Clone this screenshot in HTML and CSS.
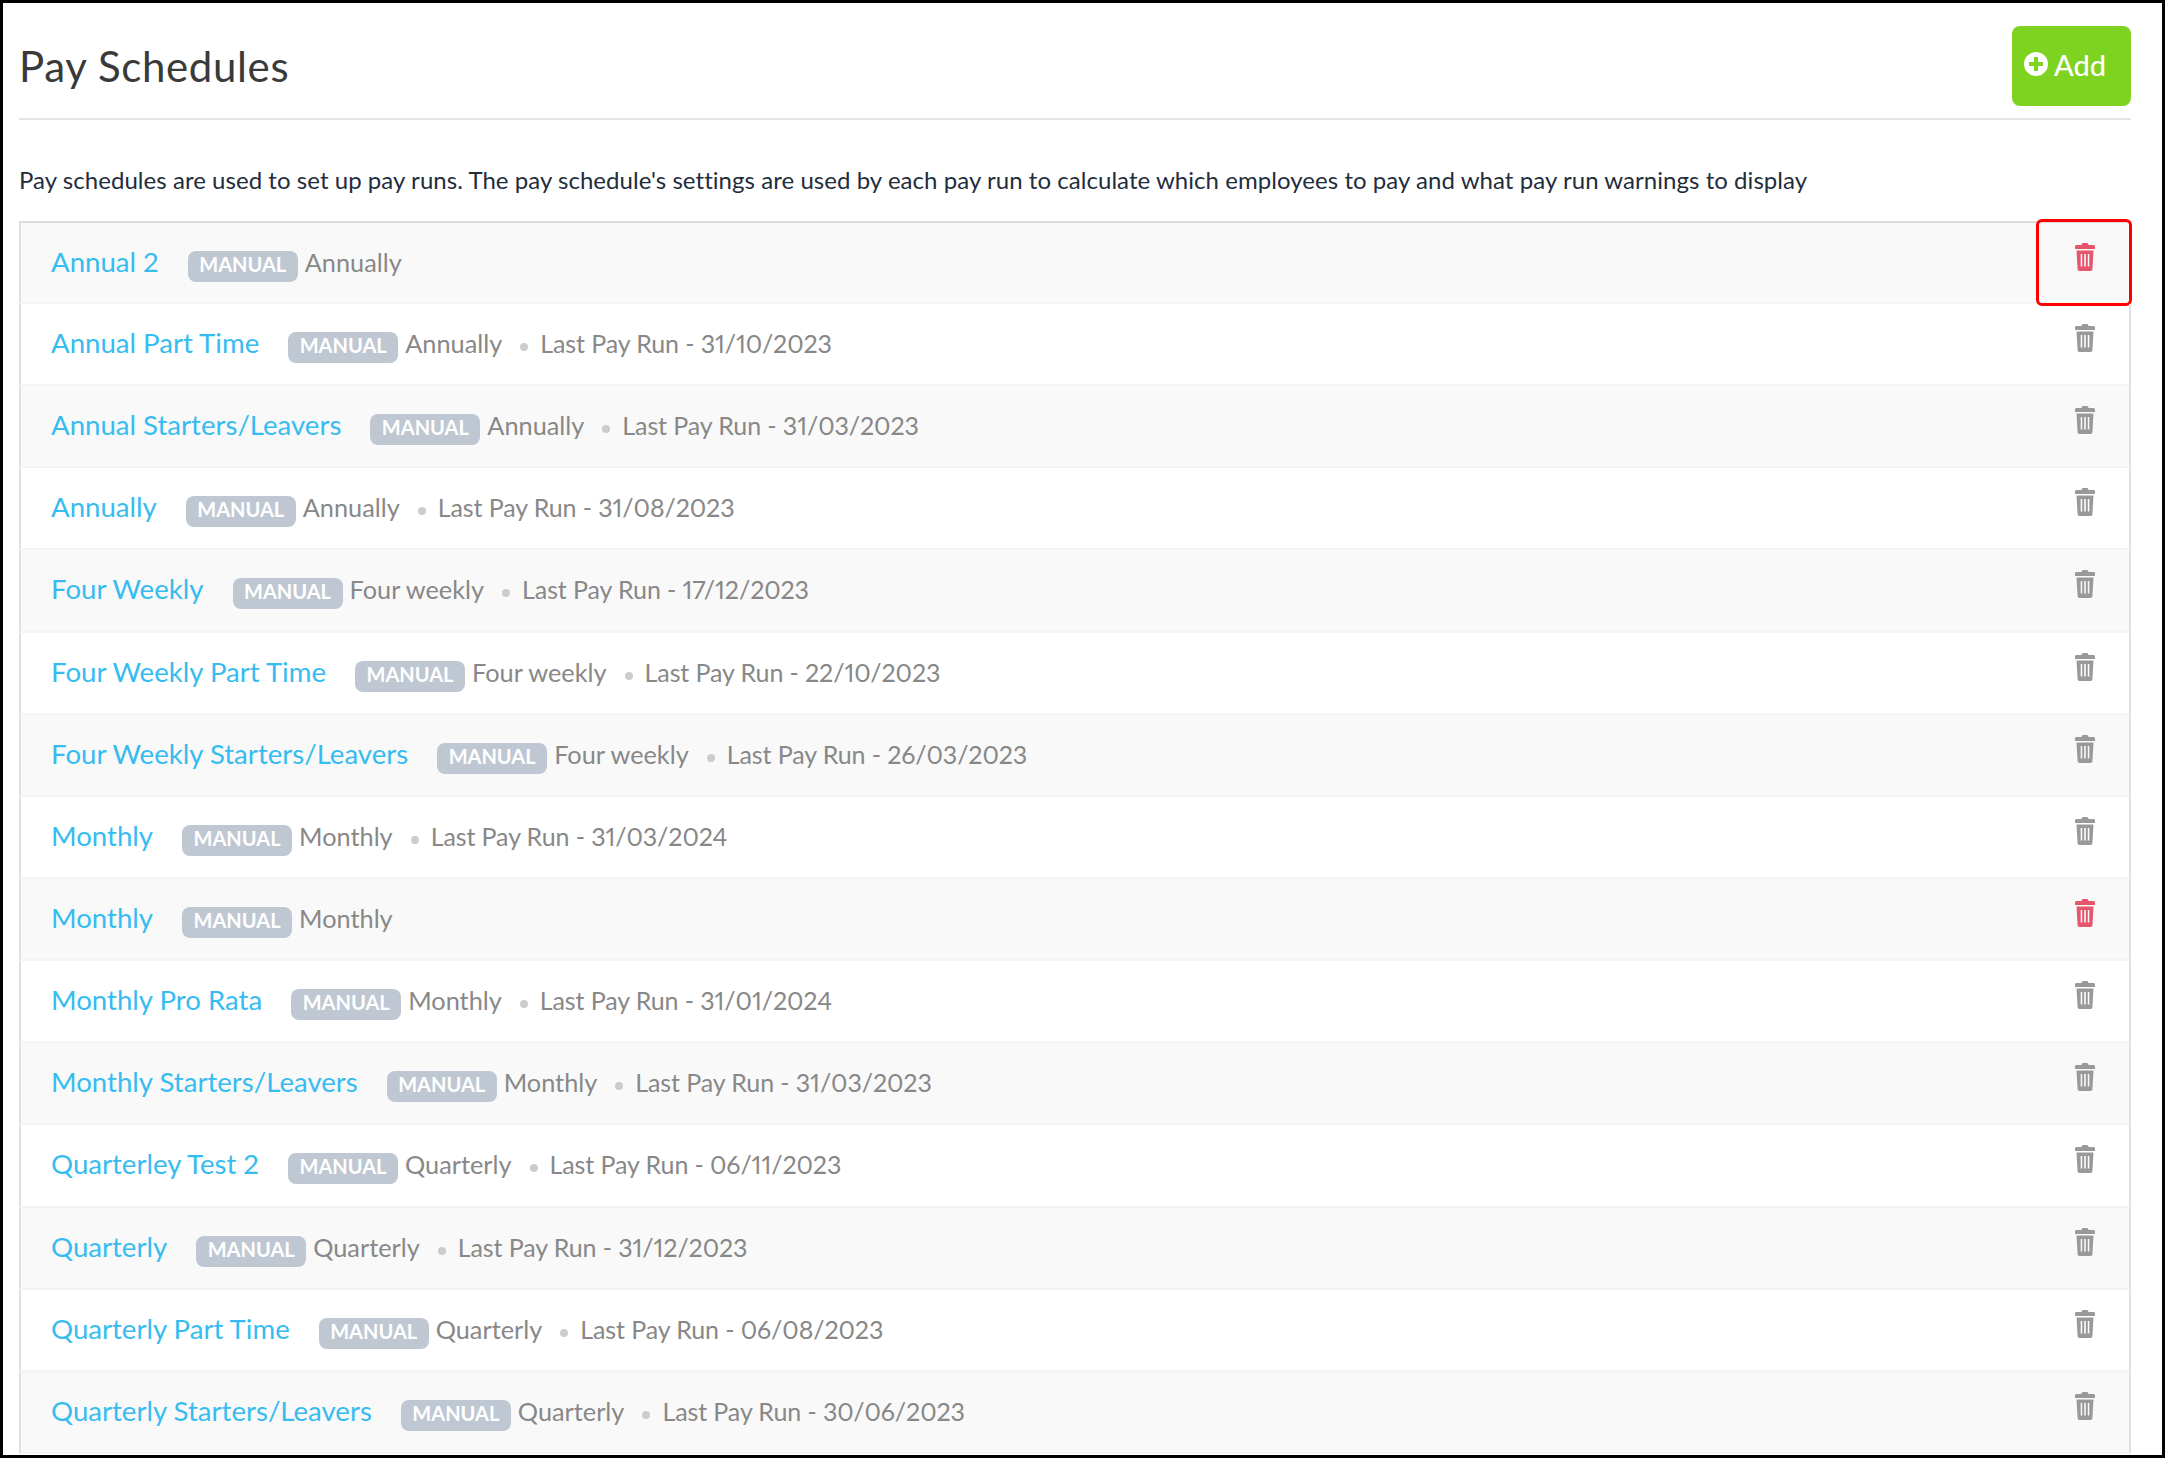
FILE: index.html
```html
<!DOCTYPE html>
<html lang="en">
<head>
<meta charset="utf-8">
<title>Pay Schedules</title>
<link rel="stylesheet" href="styles.css">
</head>
<body>
<svg class="defs" width="0" height="0" aria-hidden="true">
  <symbol id="trash" viewBox="0 0 20 28">
    <path fill-rule="evenodd" d="M7 .6C7.2.2 7.6 0 8 0h4c.4 0 .8.2 1 .6l.5 1.4h5c.8 0 1.5.6 1.5 1.4V6H0V3.400C0 2.600.7 2 1.500 2h5zM1.500 7.500h17l-1.100 18.800c-.1 1-.9 1.700-1.900 1.700H4.500c-1 0-1.800-.7-1.900-1.700zM5.700 11v12.500h1.500V11zM9.200 11v12.500h1.600V11zM12.800 11v12.500h1.500V11z"/>
  </symbol>
</svg>
<main class="frame">
  <header class="head">
    <h1 class="title">Pay Schedules</h1>
    <a class="add">
      <svg class="plus" viewBox="0 0 24 24"><path fill-rule="evenodd" d="M12 0a12 12 0 1 1 0 24a12 12 0 0 1 0-24zM10 5v5H5v4h5v5h4v-5h5v-4h-5V5z"/></svg>
      <span>Add</span>
    </a>
  </header>
  <p class="desc">Pay schedules are used to set up pay runs. The pay schedule's settings are used by each pay run to calculate which employees to pay and what pay run warnings to display</p>
  <ul class="list">
    <li class="row first"><div class="info"><a class="name">Annual 2</a><span class="badge">MANUAL</span><span class="meta">Annually</span></div><svg class="bin hot"><use href="#trash"/></svg><span class="callout"></span></li>
    <li class="row"><div class="info"><a class="name">Annual Part Time</a><span class="badge">MANUAL</span><span class="meta">Annually</span><i class="dot"></i><span class="meta">Last Pay Run - 31/10/2023</span></div><svg class="bin"><use href="#trash"/></svg></li>
    <li class="row"><div class="info"><a class="name">Annual Starters/Leavers</a><span class="badge">MANUAL</span><span class="meta">Annually</span><i class="dot"></i><span class="meta">Last Pay Run - 31/03/2023</span></div><svg class="bin"><use href="#trash"/></svg></li>
    <li class="row"><div class="info"><a class="name">Annually</a><span class="badge">MANUAL</span><span class="meta">Annually</span><i class="dot"></i><span class="meta">Last Pay Run - 31/08/2023</span></div><svg class="bin"><use href="#trash"/></svg></li>
    <li class="row"><div class="info"><a class="name">Four Weekly</a><span class="badge">MANUAL</span><span class="meta">Four weekly</span><i class="dot"></i><span class="meta">Last Pay Run - 17/12/2023</span></div><svg class="bin"><use href="#trash"/></svg></li>
    <li class="row"><div class="info"><a class="name">Four Weekly Part Time</a><span class="badge">MANUAL</span><span class="meta">Four weekly</span><i class="dot"></i><span class="meta">Last Pay Run - 22/10/2023</span></div><svg class="bin"><use href="#trash"/></svg></li>
    <li class="row"><div class="info"><a class="name">Four Weekly Starters/Leavers</a><span class="badge">MANUAL</span><span class="meta">Four weekly</span><i class="dot"></i><span class="meta">Last Pay Run - 26/03/2023</span></div><svg class="bin"><use href="#trash"/></svg></li>
    <li class="row"><div class="info"><a class="name">Monthly</a><span class="badge">MANUAL</span><span class="meta">Monthly</span><i class="dot"></i><span class="meta">Last Pay Run - 31/03/2024</span></div><svg class="bin"><use href="#trash"/></svg></li>
    <li class="row"><div class="info"><a class="name">Monthly</a><span class="badge">MANUAL</span><span class="meta">Monthly</span></div><svg class="bin hot"><use href="#trash"/></svg></li>
    <li class="row"><div class="info"><a class="name">Monthly Pro Rata</a><span class="badge">MANUAL</span><span class="meta">Monthly</span><i class="dot"></i><span class="meta">Last Pay Run - 31/01/2024</span></div><svg class="bin"><use href="#trash"/></svg></li>
    <li class="row"><div class="info"><a class="name">Monthly Starters/Leavers</a><span class="badge">MANUAL</span><span class="meta">Monthly</span><i class="dot"></i><span class="meta">Last Pay Run - 31/03/2023</span></div><svg class="bin"><use href="#trash"/></svg></li>
    <li class="row"><div class="info"><a class="name">Quarterley Test 2</a><span class="badge">MANUAL</span><span class="meta">Quarterly</span><i class="dot"></i><span class="meta">Last Pay Run - 06/11/2023</span></div><svg class="bin"><use href="#trash"/></svg></li>
    <li class="row"><div class="info"><a class="name">Quarterly</a><span class="badge">MANUAL</span><span class="meta">Quarterly</span><i class="dot"></i><span class="meta">Last Pay Run - 31/12/2023</span></div><svg class="bin"><use href="#trash"/></svg></li>
    <li class="row"><div class="info"><a class="name">Quarterly Part Time</a><span class="badge">MANUAL</span><span class="meta">Quarterly</span><i class="dot"></i><span class="meta">Last Pay Run - 06/08/2023</span></div><svg class="bin"><use href="#trash"/></svg></li>
    <li class="row"><div class="info"><a class="name">Quarterly Starters/Leavers</a><span class="badge">MANUAL</span><span class="meta">Quarterly</span><i class="dot"></i><span class="meta">Last Pay Run - 30/06/2023</span></div><svg class="bin"><use href="#trash"/></svg></li>
  </ul>
</main>
</body>
</html>
```
FILE: styles.css
```css
html, body { margin: 0; padding: 0; background: #000; }
body { width: 2165px; height: 1458px; overflow: hidden; font-family: "Lato", "Open Sans", sans-serif; font-variant-numeric: proportional-nums; }
.defs { position: absolute; }
.frame {
  box-sizing: border-box;
  width: 2159px;
  height: 1452px;
  margin: 3px 0 0 3px;
  padding: 0 31px 0 16px;
  background: #fff;
  overflow: hidden;
}
.head {
  display: flex;
  justify-content: space-between;
  align-items: center;
  box-sizing: border-box;
  height: 117px;
  padding-top: 23px;
  padding-bottom: 12px;
  border-bottom: 2px solid #e4e4e4;
}
.title { margin: 0; font-size: 42px; line-height: 50px; font-weight: 400; color: #3a3a3a; letter-spacing: 0.65px; }
.add {
  display: flex;
  align-items: center;
  gap: 6px;
  box-sizing: border-box;
  width: 119px;
  height: 80px;
  padding: 0 0 4px 12px;
  border-radius: 8px;
  background: #7ed321;
  color: #fff;
  font-size: 29px;
  font-weight: 500;
}
.plus { width: 24px; height: 24px; fill: #fff; }
.desc { margin: 42px 0 0; height: 59px; line-height: 36px; font-size: 24px; color: #1f2d3d; letter-spacing: 0.05px; white-space: nowrap; }
.list { list-style: none; margin: 0; padding: 0; border-top: 2px solid #ddd; }
.row {
  position: relative;
  display: flex;
  justify-content: space-between;
  box-sizing: border-box;
  height: 82.15px;
  padding: 0 34px 0 30px;
  border-left: 2px solid #e0e0e0;
  border-right: 2px solid #e0e0e0;
  border-bottom: 2px solid #f2f4f6;
}
.row:nth-child(odd) { background: #f9f9f9; }
.first { height: 81px; }
.info { padding-top: 21px; line-height: 36px; white-space: nowrap; }
.name { font-size: 27.6px; color: #36bcf0; margin-right: 29px; }
.badge {
  display: inline-block;
  box-sizing: border-box;
  width: 110px;
  height: 31px;
  line-height: 27px;
  margin-right: 7px;
  border-radius: 8px;
  background: #bfc8d2;
  color: #fff;
  font-size: 20px;
  font-weight: 700;
  text-align: center;
  vertical-align: 0;
}
.meta { font-size: 25.3px; color: #888; }
.dot + .meta { font-size: 25px; letter-spacing: -0.1px; }
.dot { display: inline-block; width: 8px; height: 8px; margin: 0 12px 2px 18px; border-radius: 50%; background: #ccc; }
.bin { width: 20px; height: 28px; margin-top: 20px; fill: #999; }
.hot { fill: #e5566d; }
.callout {
  position: absolute;
  top: -4px;
  right: -3px;
  box-sizing: border-box;
  width: 96px;
  height: 87px;
  border: 3px solid #f00;
  border-radius: 6px;
}
```
